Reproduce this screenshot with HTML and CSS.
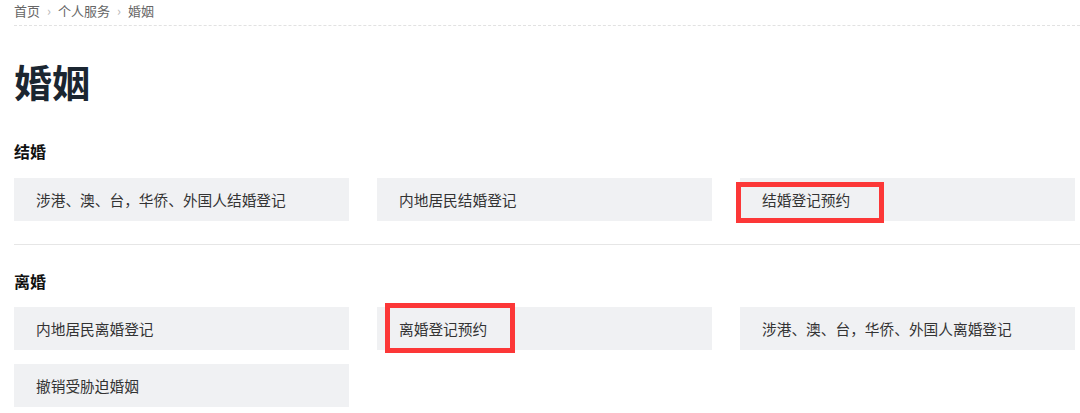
FILE: index.html
```html
<!DOCTYPE html>
<html lang="zh-CN">
<head>
    <meta charset="UTF-8">
    <meta name="viewport" content="width=device-width, initial-scale=1.0">
    <title>婚姻 - 个人服务</title>
    <link rel="stylesheet" href="styles.css">
</head>
<body>
    <!-- Breadcrumb -->
    <div class="crumbs">
        <a href="#">首页</a>
        <span class="sep">›</span>
        <a href="#">个人服务</a>
        <span class="sep">›</span>
        <span class="current">婚姻</span>
    </div>

    <h1 class="page-title">婚姻</h1>

    <section class="group">
        <h2 class="group-title">结婚</h2>
        <div class="links">
            <a class="link-card" href="#">涉港、澳、台，华侨、外国人结婚登记</a>
            <a class="link-card" href="#">内地居民结婚登记</a>
            <a class="link-card" href="#">结婚登记预约<span class="mark mark-one"></span></a>
        </div>
    </section>

    <hr class="divider">

    <section class="group">
        <h2 class="group-title">离婚</h2>
        <div class="links">
            <a class="link-card" href="#">内地居民离婚登记</a>
            <a class="link-card" href="#">离婚登记预约<span class="mark mark-two"></span></a>
            <a class="link-card" href="#">涉港、澳、台，华侨、外国人离婚登记</a>
            <a class="link-card" href="#">撤销受胁迫婚姻</a>
        </div>
    </section>
</body>
</html>
```

FILE: styles.css
```css
body {
    margin: 0;
    padding: 0 0 0 14px;
    background-color: #ffffff;
    color: #333333;
    font-family: "Noto Sans CJK SC", "Noto Sans", sans-serif;
    overflow: hidden;
}

a {
    color: inherit;
    text-decoration: none;
}

/* Breadcrumb */
.crumbs {
    height: 25px;
    line-height: 22px;
    font-size: 13px;
    color: #666666;
    border-bottom: 1px dashed #e2e2e2;
    display: flex;
    gap: 7px;
}

.crumbs .sep {
    color: #b8b8b8;
}

.page-title {
    margin: 27px 0 0;
    font-size: 38px;
    line-height: 56px;
    font-weight: 700;
    color: #1b2631;
}

.group-title {
    margin: 30px 0 15px;
    font-size: 16px;
    line-height: 24px;
    font-weight: 700;
    color: #111111;
}

.divider + .group .group-title {
    margin-top: 24px;
    margin-bottom: 14px;
}

.links {
    display: grid;
    grid-template-columns: repeat(3, 335px);
    column-gap: 28px;
    row-gap: 14px;
}

.link-card {
    position: relative;
    height: 43px;
    line-height: 43px;
    padding-left: 22px;
    background-color: #f0f1f3;
    font-size: 14.7px;
    color: #333333;
}

.divider {
    margin: 23px 0 0;
    border: none;
    border-top: 1px solid #e6e6e6;
}

/* Red annotation boxes drawn over the screenshot */
.mark {
    position: absolute;
    border: 5px solid #fc3737;
    box-sizing: border-box;
}

.mark-one {
    left: -4px;
    top: 4px;
    width: 148px;
    height: 41px;
}

.mark-two {
    left: 8px;
    top: -4px;
    width: 130px;
    height: 50px;
}
```
